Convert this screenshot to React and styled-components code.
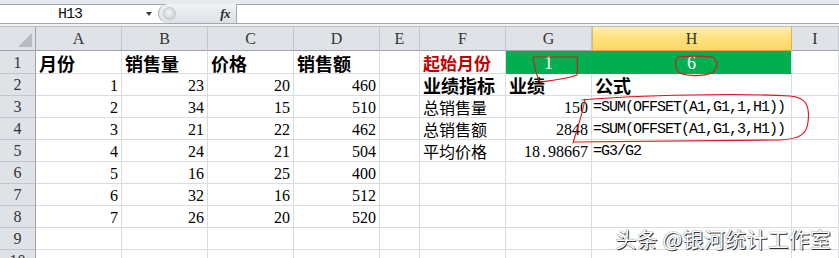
import React from 'react';
import styled, { createGlobalStyle, css } from 'styled-components';

const GlobalStyle = createGlobalStyle`
  html, body { margin: 0; padding: 0; background: #fff; }
  body { width: 839px; height: 258px; overflow: hidden; font-family: "Noto Sans CJK SC", sans-serif; }
  * { box-sizing: border-box; }
`;

const Page = styled.div`
  position: relative;
  width: 839px;
  height: 258px;
  overflow: hidden;
  display: flex;
  flex-direction: column;
  background: #fff;
`;

const TopStrip = styled.div`
  height: 5px;
  flex: none;
  background: #e6e9ed;
  border-bottom: 1px solid #a5a8ad;
`;

const FormulaBar = styled.div`
  height: 19px;
  flex: none;
  display: flex;
  background: #fff;
  border-bottom: 1px solid #a5a8ad;
`;

const NameBox = styled.div`
  width: 140px;
  display: flex;
  align-items: center;
  justify-content: center;
  font-family: "Liberation Mono", monospace;
  font-size: 15px;
  letter-spacing: -1px;
  color: #111;
`;

const DropArrow = styled.div`
  width: 18px;
  display: flex;
  align-items: center;
  justify-content: center;
  &::after {
    content: "";
    border-left: 3.5px solid transparent;
    border-right: 3.5px solid transparent;
    border-top: 4px solid #3c3c3c;
  }
`;

const FxWidget = styled.div`
  width: 79px;
  display: flex;
  align-items: center;
  justify-content: space-between;
  padding: 0 6px 0 4px;
  background: linear-gradient(#eff1f4, #dde1e6);
  border-left: 1px solid #a5a8ad;
  border-right: 1px solid #a5a8ad;
  border-radius: 10px 0 0 10px;
  margin-top: -1px;
`;

const RoundBtn = styled.div`
  width: 13px;
  height: 13px;
  border-radius: 50%;
  background: radial-gradient(circle at 45% 40%, #f4f5f7 0%, #cfd3d8 70%, #b9bec4 100%);
  border: 1px solid #c3c7cc;
`;

const FxLabel = styled.span`
  font-family: "Liberation Serif", serif;
  font-style: italic;
  font-weight: bold;
  font-size: 13px;
  color: #2a2a2a;
  letter-spacing: -0.5px;
`;

const FormulaInput = styled.div`
  flex: 1;
  background: #fff;
`;

const Gap = styled.div`
  height: 3px;
  flex: none;
  background: #f3f4f6;
  border-bottom: 1px solid #b9bdc2;
`;

const Grid = styled.div`
  display: grid;
  grid-template-columns: 36px 86px 86px 86px 86px 40px 86px 86px 200px 1fr;
  grid-template-rows: 24px 23px repeat(9, 22px);
`;

const headerBase = css`
  background: #dfe3e8;
  color: #333;
  font-family: "Liberation Serif", serif;
  font-size: 16px;
  display: flex;
  align-items: center;
  justify-content: center;
`;

const Corner = styled.div`
  ${headerBase};
  align-items: flex-end;
  justify-content: flex-end;
  padding: 0 3px 3px 0;
  border-right: 1px solid #9ea3a9;
  border-bottom: 1px solid #9ea3a9;
  &::after {
    content: "";
    width: 14px;
    height: 14px;
    background: #b7bcc2;
    clip-path: polygon(100% 0, 100% 100%, 0 100%);
  }
`;

const ColHead = styled.div`
  ${headerBase};
  padding-top: 1px;
  border-right: 1px solid #c3c7cd;
  border-bottom: 1px solid #9ea3a9;
  ${(p) =>
    p.$selected &&
    css`
      background: linear-gradient(#feeeb4 0%, #fde27f 45%, #fbd865 100%);
      border-right-color: #e2b24c;
      border-bottom-color: #e2a93a;
      box-shadow: inset 1px 0 0 #e8bb55;
    `}
`;

const RowHead = styled.div`
  ${headerBase};
  align-items: flex-end;
  line-height: 18px;
  padding-bottom: 1px;
  border-right: 1px solid #9ea3a9;
  border-bottom: 1px solid #c3c7cd;
`;

const kinds = {
  num: css`
    font-family: "Liberation Serif", serif;
    font-size: 16px;
    line-height: 16px;
    justify-content: flex-end;
    padding-bottom: 1px;
  `,
  formula: css`
    font-family: "Liberation Mono", monospace;
    font-size: 15px;
    letter-spacing: -1px;
    line-height: 16px;
    justify-content: flex-start;
    padding-left: 1px;
    padding-bottom: 1px;
  `,
  text: css`
    font-size: 16px;
    line-height: 18px;
    justify-content: flex-start;
    padding-bottom: 1px;
  `,
  bold: css`
    font-size: 18px;
    font-weight: 700;
    line-height: 18px;
    justify-content: flex-start;
    padding-bottom: 1px;
  `,
  title: css`
    font-size: 17px;
    font-weight: 700;
    line-height: 18px;
    color: #c00000;
    justify-content: flex-start;
    padding-bottom: 1px;
  `,
  badge: css`
    font-family: "Liberation Serif", serif;
    font-size: 18px;
    line-height: 18px;
    color: #fff;
    justify-content: center;
    padding-bottom: 1px;
  `,
};

const Cell = styled.div`
  display: flex;
  align-items: flex-end;
  padding: 0 3px;
  color: #000;
  white-space: nowrap;
  overflow: visible;
  border-right: 1px solid #dadcdf;
  border-bottom: 1px solid #dadcdf;
  ${(p) => kinds[p.$kind || 'num']};
  ${(p) =>
    p.$green &&
    css`
      background: #00b050;
      border-bottom-color: #00b050;
      border-right-color: ${p.$joinRight ? '#00b050' : '#dadcdf'};
    `}
`;

const Dot = styled.span`
  display: inline-block;
  width: 8px;
  text-align: center;
`;

const Watermark = styled.div`
  position: absolute;
  right: 8px;
  bottom: 9px;
  font-family: "Noto Sans CJK SC", sans-serif;
  font-size: 21px;
  line-height: 22px;
  color: #fff;
  letter-spacing: 0.2px;
  text-shadow: 1px 1px 0 #333, 0 0 1px #444;
`;

const Overlay = styled.svg`
  position: absolute;
  left: 0;
  top: 0;
  pointer-events: none;
`;

const cols = ['A', 'B', 'C', 'D', 'E', 'F', 'G', 'H', 'I'];

const B = (t) => ({ t, k: 'bold' });
const T = (t) => ({ t, k: 'text' });
const N = (t) => ({ t, k: 'num' });
const F = (t) => ({ t, k: 'formula' });
const E = { t: '', k: 'num' };

const renderNum = (t) => {
  if (!t.includes('.')) return t;
  const [a, b] = t.split('.');
  return (
    <>
      {a}
      <Dot>.</Dot>
      {b}
    </>
  );
};

const rows = [
  [B('月份'), B('销售量'), B('价格'), B('销售额'), E, { t: '起始月份', k: 'title' }, { t: '1', k: 'badge', green: true, join: true }, { t: '6', k: 'badge', green: true }, E],
  [N('1'), N('23'), N('20'), N('460'), E, B('业绩指标'), B('业绩'), B('公式'), E],
  [N('2'), N('34'), N('15'), N('510'), E, T('总销售量'), N('150'), F('=SUM(OFFSET(A1,G1,1,H1))'), E],
  [N('3'), N('21'), N('22'), N('462'), E, T('总销售额'), N('2848'), F('=SUM(OFFSET(A1,G1,3,H1))'), E],
  [N('4'), N('24'), N('21'), N('504'), E, T('平均价格'), N('18.98667'), F('=G3/G2'), E],
  [N('5'), N('16'), N('25'), N('400'), E, E, E, E, E],
  [N('6'), N('32'), N('16'), N('512'), E, E, E, E, E],
  [N('7'), N('26'), N('20'), N('520'), E, E, E, E, E],
  [E, E, E, E, E, E, E, E, E],
  [E, E, E, E, E, E, E, E, E],
];

export default function App() {
  return (
    <Page>
      <GlobalStyle />
      <TopStrip />
      <FormulaBar>
        <NameBox>H13</NameBox>
        <DropArrow />
        <FxWidget>
          <RoundBtn />
          <FxLabel>fx</FxLabel>
        </FxWidget>
        <FormulaInput />
      </FormulaBar>
      <Gap />
      <Grid>
        <Corner />
        {cols.map((c) => (
          <ColHead key={c} $selected={c === 'H'}>
            {c}
          </ColHead>
        ))}
        {rows.map((r, i) => (
          <React.Fragment key={i}>
            <RowHead>{i + 1}</RowHead>
            {r.map((cell, j) => (
              <Cell key={j} $kind={cell.k} $green={cell.green} $joinRight={cell.join}>
                {cell.k === 'num' ? renderNum(cell.t) : cell.t}
              </Cell>
            ))}
          </React.Fragment>
        ))}
      </Grid>
      <Overlay width="839" height="258" viewBox="0 0 839 258">
        <g fill="none" stroke="#e0141b" strokeWidth="1.1" strokeLinecap="round" strokeLinejoin="round">
          <path d="M533 57 L577 57 C578 64 577 70 577 75 C570 78 556 80 540 82 C536 76 535 68 533 57" />
          <path d="M678 57 C690 56 704 56 712 57 C718 60 719 68 712 73 C704 76 690 77 680 73 C675 70 674 62 678 57" />
          <path d="M585 99 C583 112 578 126 573 143" />
          <path d="M582 100 C640 95 740 93 790 96 C806 97 810 106 808 122 C807 134 800 139 780 140 L574 142" />
        </g>
      </Overlay>
      <Watermark>头条 @银河统计工作室</Watermark>
    </Page>
  );
}
